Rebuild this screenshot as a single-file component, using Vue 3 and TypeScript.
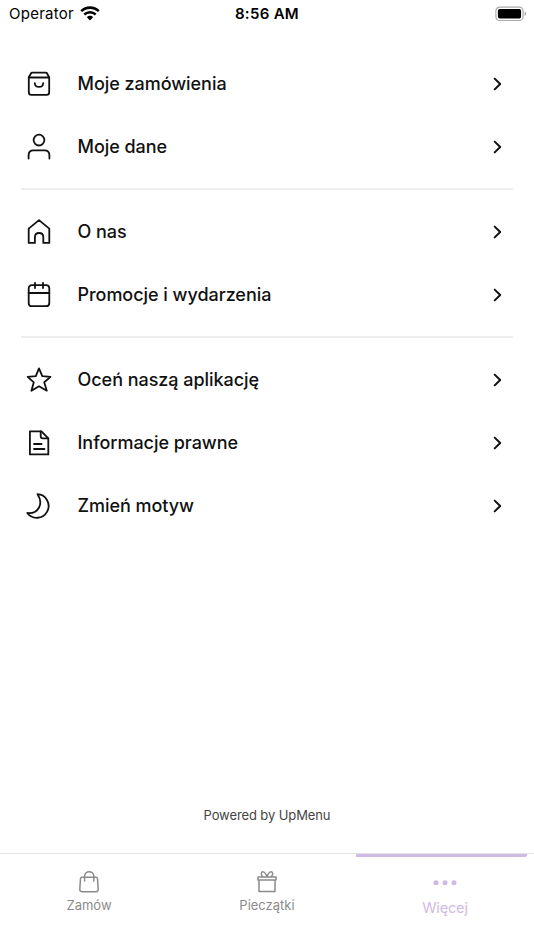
<script setup lang="ts">
interface MenuItem {
  label: string
  paths: string[]
}

const groups: MenuItem[][] = [
  [
    {
      label: 'Moje zamówienia',
      paths: [
        'M3.8 7.5 5.9 3.5Q6.3 2.7 7.3 2.7H20.7Q21.7 2.7 22.1 3.5L24.2 7.5V22.2Q24.2 24.8 21.6 24.8H6.4Q3.8 24.8 3.8 22.2Z',
        'M3.8 7.5H24.2',
        'M9.8 13.2C10.2 18.1 17.8 18.1 18.2 13.2',
      ],
    },
    {
      label: 'Moje dane',
      paths: ['M19.4 7.1A5.4 5.4 0 1 1 8.6 7.1A5.4 5.4 0 1 1 19.4 7.1Z', 'M3.6 25.5V22.3Q3.6 17.4 8.5 17.4H19.5Q24.4 17.4 24.4 22.3V25.5'],
    },
  ],
  [
    {
      label: 'O nas',
      paths: ['M3.7 10.6 14 2.1 24.3 10.6V24.9H18.3V19.3Q18.3 15 14.1 15Q9.9 15 9.9 19.3V24.9H3.7Z'],
    },
    {
      label: 'Promocje i wydarzenia',
      paths: ['M7 4.2H21Q24.3 4.2 24.3 7.5V21.9Q24.3 25.2 21 25.2H7Q3.7 25.2 3.7 21.9V7.5Q3.7 4.2 7 4.2Z', 'M3.7 12H24.3', 'M10 1.8V7.1M18 1.8V7.1'],
    },
  ],
  [
    {
      label: 'Oceń naszą aplikację',
      paths: ['M14 2.4 17.3 10.1 25.5 10.9 19.2 16.3 21.8 24.7 14 20.3 6.4 24.7 8.8 16.3 2.7 10.9 10.8 10.1Z'],
    },
    {
      label: 'Informacje prawne',
      paths: ['M4.9 2.4H16.5L23.3 9.3V25.4H4.9Z', 'M15.7 2.4V7.2Q15.7 9.3 17.8 9.3H23.3', 'M9 15H16.6M9 20H19.5'],
    },
    {
      label: 'Zmień motyw',
      paths: ['M12.5 2.2A11.8 11.8 0 1 1 2.3 21C13.6 22.2 18.8 11.5 12.5 2.2Z'],
    },
  ],
]
</script>

<template>
  <div class="screen">
    <header class="status">
      <div class="carrier">
        <span>Operator</span>
        <svg class="wifi" width="20" height="15" viewBox="0 0 20 15" fill="none" stroke="#000">
          <path d="M1.2 5.1C6.2.4 13.8.4 18.8 5.1" stroke-width="2.6" />
          <path d="M4.3 8.5C7.5 5.5 12.5 5.5 15.7 8.5" stroke-width="2.4" />
          <path d="M6.9 11.2C8.6 9.4 11.4 9.4 13.1 11.2L10 14.4Z" fill="#000" stroke="none" />
        </svg>
      </div>
      <div class="time">8:56 AM</div>
      <svg class="battery" width="32" height="16" viewBox="0 0 32 16">
        <rect x=".9" y="1.1" width="27.2" height="13.4" rx="3.8" fill="none" stroke="#aaa" stroke-width="1.2" />
        <rect x="2.9" y="3" width="23.2" height="9.6" rx="1.8" fill="#000" />
        <path d="M29.7 5.6Q32.6 7.8 29.7 10Z" fill="#999" />
      </svg>
    </header>

    <main class="menu">
      <section v-for="(group, i) in groups" :key="i" class="group">
        <div v-for="item in group" :key="item.label" class="row">
          <svg class="icon" width="28" height="28" viewBox="0 0 28 28">
            <path v-for="d in item.paths" :key="d" :d="d" />
          </svg>
          <span class="label">{{ item.label }}</span>
          <svg class="chevron" width="10" height="14" viewBox="0 0 10 14">
            <path d="M1.7 1.6 7.2 7 1.7 12.4" />
          </svg>
        </div>
      </section>
    </main>

    <p class="powered">Powered by UpMenu</p>

    <nav class="tabs">
      <div class="tab">
        <svg width="24" height="24" viewBox="0 0 24 24" class="tab-icon">
          <path d="M4.9 7.2H19.1Q20.3 7.2 20.5 8.4L21.2 19.2Q21.3 21.7 18.9 21.7H5.1Q2.7 21.7 2.8 19.2L3.5 8.4Q3.7 7.2 4.9 7.2Z" />
          <path d="M7.6 11V6.2C7.6 .2 16.8 .2 16.8 6.2V11" />
        </svg>
        <span>Zamów</span>
      </div>
      <div class="tab">
        <svg width="24" height="24" viewBox="0 0 24 24" class="tab-icon">
          <path d="M3 6.9H21V10H3ZM4 10V21.6H20V10M12 6.9C10 .4 5.8 .7 6.4 4.7Q6.8 6.4 8.4 6.9M12 6.9C14 .4 18.2 .7 17.6 4.7Q17.2 6.4 15.6 6.9" />
        </svg>
        <span>Pieczątki</span>
      </div>
      <div class="tab active">
        <svg width="24" height="24" viewBox="0 0 24 24" class="dots">
          <circle cx="3" cy="11.7" r="2.5" />
          <circle cx="12" cy="11.7" r="2.5" />
          <circle cx="21" cy="11.7" r="2.5" />
        </svg>
        <span>Więcej</span>
      </div>
    </nav>
  </div>
</template>

<style>
body {
  background: #fff;
}
</style>

<style scoped>
.screen {
  width: 534px;
  height: 950px;
  display: flex;
  flex-direction: column;
  overflow: hidden;
  background: #fff;
  color: #111;
  font-family: Inter, 'Liberation Sans', sans-serif;
}

.status {
  height: 28px;
  flex: none;
  display: grid;
  grid-template-columns: 1fr auto 1fr;
  align-items: center;
  padding: 0 7px 0 9px;
  box-sizing: border-box;
  color: #000;
}

.carrier {
  display: flex;
  align-items: center;
  gap: 6px;
  font-size: 15px;
  letter-spacing: 0.25px;
}

.carrier span,
.time {
  line-height: 18px;
  padding-bottom: 1px;
}

.wifi {
  margin-top: -2px;
}

.time {
  font-size: 15px;
  font-weight: 600;
  letter-spacing: 0.3px;
  margin-left: -2px;
}

.battery {
  justify-self: end;
  margin-top: -1px;
}

.menu {
  flex: 1;
  padding: 24px 21px 0;
}

.group + .group {
  border-top: 2px solid #eee;
  margin-top: 10px;
  padding-top: 10px;
}

.row {
  height: 63px;
  display: flex;
  align-items: center;
  padding: 0 10px 0 4px;
}

.icon {
  flex: none;
  fill: none;
  stroke: #111;
  stroke-width: 1.8;
  stroke-linecap: round;
  stroke-linejoin: round;
}

.label {
  flex: 1;
  margin-left: 24.5px;
  font-size: 18px;
  font-weight: 500;
  line-height: 24px;
  letter-spacing: -0.04px;
}

.chevron {
  fill: none;
  stroke: #111;
  stroke-width: 2;
  stroke-linecap: round;
  stroke-linejoin: round;
}

.powered {
  margin: 0 0 29px;
  text-align: center;
  font-size: 13px;
  line-height: 18px;
  color: #444;
  letter-spacing: -0.1px;
}

.tabs {
  height: 97px;
  flex: none;
  box-sizing: border-box;
  border-top: 1px solid #e3e3e3;
  display: grid;
  grid-template-columns: repeat(3, 1fr);
}

.tab {
  position: relative;
  display: flex;
  flex-direction: column;
  align-items: center;
  padding-top: 16px;
  font-size: 13px;
  line-height: 18px;
  color: #8b8b8b;
}

.tab span {
  margin-top: 2px;
}

.tab-icon {
  fill: none;
  stroke: #8b8b8b;
  stroke-width: 1.5;
  stroke-linecap: round;
  stroke-linejoin: round;
}

.tab.active {
  padding-top: 17px;
  color: #d0b9e3;
  font-size: 14.5px;
}

.tab.active::before {
  content: '';
  position: absolute;
  top: 0;
  left: 0;
  right: 7px;
  height: 3px;
  background: #d0b9e3;
  border-radius: 0 0 2px 0;
}

.dots {
  fill: #d0b9e3;
}

.tab.active span {
  margin-top: 4px;
  letter-spacing: -0.15px;
}
</style>
